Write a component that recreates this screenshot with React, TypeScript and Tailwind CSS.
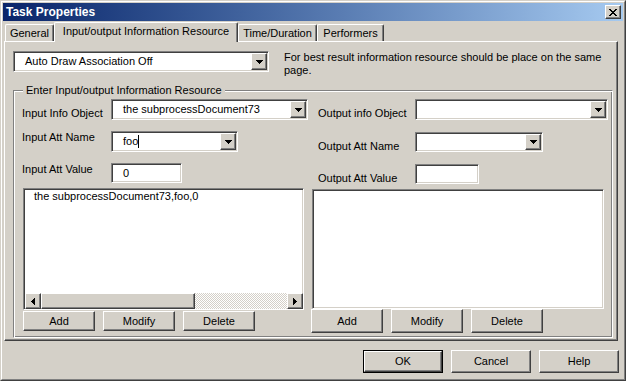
import React from 'react';

const raised =
  'border border-t-white border-l-white border-r-[#404040] border-b-[#404040] shadow-[inset_-1px_-1px_0_#808080]';
const sunken =
  'border border-t-[#808080] border-l-[#808080] border-r-white border-b-white shadow-[inset_1px_1px_0_#404040,inset_-1px_-1px_0_#d4d0c8]';

const DownArrow = () => (
  <svg width="7" height="4" viewBox="0 0 7 4" shapeRendering="crispEdges">
    <rect x="0" y="0" width="7" height="1" fill="#000" />
    <rect x="1" y="1" width="5" height="1" fill="#000" />
    <rect x="2" y="2" width="3" height="1" fill="#000" />
    <rect x="3" y="3" width="1" height="1" fill="#000" />
  </svg>
);

const LeftArrow = () => (
  <svg width="4" height="7" viewBox="0 0 4 7" shapeRendering="crispEdges">
    <rect x="0" y="3" width="1" height="1" fill="#000" />
    <rect x="1" y="2" width="1" height="3" fill="#000" />
    <rect x="2" y="1" width="1" height="5" fill="#000" />
    <rect x="3" y="0" width="1" height="7" fill="#000" />
  </svg>
);

const RightArrow = () => (
  <svg width="4" height="7" viewBox="0 0 4 7" shapeRendering="crispEdges">
    <rect x="0" y="0" width="1" height="7" fill="#000" />
    <rect x="1" y="1" width="1" height="5" fill="#000" />
    <rect x="2" y="2" width="1" height="3" fill="#000" />
    <rect x="3" y="3" width="1" height="1" fill="#000" />
  </svg>
);

const CloseX = () => (
  <svg width="8" height="7" viewBox="0 0 8 7" shapeRendering="crispEdges">
    <rect x="0" y="0" width="2" height="1" fill="#000" />
    <rect x="6" y="0" width="2" height="1" fill="#000" />
    <rect x="1" y="1" width="2" height="1" fill="#000" />
    <rect x="5" y="1" width="2" height="1" fill="#000" />
    <rect x="2" y="2" width="4" height="1" fill="#000" />
    <rect x="3" y="3" width="2" height="1" fill="#000" />
    <rect x="2" y="4" width="4" height="1" fill="#000" />
    <rect x="1" y="5" width="2" height="1" fill="#000" />
    <rect x="5" y="5" width="2" height="1" fill="#000" />
    <rect x="0" y="6" width="2" height="1" fill="#000" />
    <rect x="6" y="6" width="2" height="1" fill="#000" />
  </svg>
);

const Combo = ({ className, children }: { className: string; children?: React.ReactNode }) => (
  <div className={`flex bg-white ${sunken} ${className}`}>
    <div className="flex-1 flex items-center pl-[11px] whitespace-nowrap overflow-hidden">{children}</div>
    <div className={`m-px w-[16px] flex items-center justify-center bg-[#d4d0c8] ${raised}`}>
      <DownArrow />
    </div>
  </div>
);

const Edit = ({ className, children }: { className: string; children?: React.ReactNode }) => (
  <div className={`flex items-center bg-white pl-[11px] ${sunken} ${className}`}>{children}</div>
);

const Btn = ({ className, children }: { className: string; children: React.ReactNode }) => (
  <div className={`flex items-center justify-center bg-[#d4d0c8] ${raised} ${className}`}>{children}</div>
);

const Tab = ({ label, w }: { label: string; w: string }) => (
  <div
    className={`${w} h-[17px] flex items-center justify-center rounded-t-[2px] border-t border-l border-r border-t-white border-l-white border-r-[#404040] shadow-[inset_-1px_0_0_#808080]`}
  >
    {label}
  </div>
);

export default function App() {
  return (
    <div className="w-[626px] h-[381px] overflow-hidden bg-[#d4d0c8] font-['Liberation_Sans',Arial,sans-serif] text-[11px] leading-[13px] text-black border border-t-[#d4d0c8] border-l-[#d4d0c8] border-r-[#404040] border-b-[#404040]">
      <div className="h-full flex flex-col p-px border border-t-white border-l-white border-r-[#808080] border-b-[#808080]">
        {/* title bar */}
        <div className="h-[18px] shrink-0 flex items-center justify-between pl-[3px] pr-[2px] bg-linear-to-r from-[#0a246a] to-[#a6caf0]">
          <span className="text-white font-bold text-[12px]">Task Properties</span>
          <div className={`w-[16px] h-[14px] flex items-center justify-center bg-[#d4d0c8] ${raised}`}>
            <CloseX />
          </div>
        </div>

        {/* tabs */}
        <div className="h-[20px] shrink-0 flex items-end pl-[2px]">
          <Tab label="General" w="w-[49px]" />
          <div className="relative z-10 -mb-px w-[184px] h-[20px] pb-[2px] flex items-center justify-center bg-[#d4d0c8] rounded-t-[2px] border-t border-l border-r border-t-white border-l-white border-r-[#404040] shadow-[inset_-1px_0_0_#808080]">
            Input/output Information Resource
          </div>
          <Tab label="Time/Duration" w="w-[79px]" />
          <Tab label="Performers" w="w-[67px]" />
        </div>

        {/* panel */}
        <div className="ml-px w-[614px] h-[300px] shrink-0 pt-[9px] pl-[8px] border border-t-white border-l-white border-r-[#404040] border-b-[#404040] shadow-[inset_-1px_-1px_0_#808080]">
          <div className="flex items-start">
            <Combo className="w-[256px] h-[21px]">Auto Draw Association Off</Combo>
            <p className="ml-[15px] w-[318px]">
              For best result information resource should be place on the same page.
            </p>
          </div>

          <fieldset className="mt-[7px] w-[600px] h-[254px] border border-t-[#808080] border-l-[#808080] border-r-white border-b-white shadow-[inset_1px_1px_0_#fff,inset_-1px_-1px_0_#808080]">
            <legend className="ml-[9px] px-[3px] bg-[#d4d0c8]">Enter Input/output Information Resource</legend>
            <div className="flex">
              {/* left column */}
              <div className="ml-[8px] w-[289px] flex flex-col">
                <div className="flex items-start mt-[2px]">
                  <span className="w-[89px] mt-[8px]">Input Info Object</span>
                  <Combo className="w-[197px] h-[21px]">the subprocessDocument73</Combo>
                </div>
                <div className="flex items-start mt-[11px]">
                  <span className="w-[89px]">Input Att Name</span>
                  <Combo className="w-[127px] h-[21px]">
                    foo<span className="w-px h-[13px] bg-black" />
                  </Combo>
                </div>
                <div className="flex items-start mt-[11px]">
                  <span className="w-[89px]">Input Att Value</span>
                  <Edit className="w-[71px] h-[20px]">0</Edit>
                </div>
                <div className={`mt-[5px] ml-px w-[281px] h-[122px] flex flex-col bg-white ${sunken}`}>
                  <div className="flex-1 pt-px pl-[10px]">the subprocessDocument73,foo,0</div>
                  <div className="ml-px h-[16px] flex">
                    <div className={`w-[16px] h-[16px] flex items-center justify-center bg-[#d4d0c8] ${raised}`}>
                      <LeftArrow />
                    </div>
                    <div className={`w-[154px] h-[16px] bg-[#d4d0c8] ${raised}`} />
                    <div className="flex-1 bg-[repeating-conic-gradient(#ffffff_0_25%,#d4d0c8_0_50%)] bg-[length:2px_2px]" />
                    <div className={`w-[16px] h-[16px] flex items-center justify-center bg-[#d4d0c8] ${raised}`}>
                      <RightArrow />
                    </div>
                  </div>
                </div>
                <div className="mt-px ml-px flex gap-[8px]">
                  <Btn className="w-[72px] h-[20px]">Add</Btn>
                  <Btn className="w-[72px] h-[20px]">Modify</Btn>
                  <Btn className="w-[72px] h-[20px]">Delete</Btn>
                </div>
              </div>

              {/* right column */}
              <div className="w-[297px] flex flex-col">
                <div className="flex items-start mt-[2px]">
                  <span className="w-[104px] pl-[7px] mt-[8px]">Output info Object</span>
                  <Combo className="w-[193px] h-[21px]" />
                </div>
                <div className="flex items-start mt-[12px]">
                  <span className="w-[104px] pl-[7px] mt-[8px]">Output Att Name</span>
                  <Combo className="w-[128px] h-[20px]" />
                </div>
                <div className="flex items-start mt-[11px]">
                  <span className="w-[104px] pl-[7px] mt-[8px]">Output Att Value</span>
                  <Edit className="w-[64px] h-[20px]" />
                </div>
                <div className={`mt-[4px] ml-px w-[292px] h-[120px] bg-white ${sunken}`} />
                <div className="flex gap-[8px]">
                  <Btn className="w-[72px] h-[24px]">Add</Btn>
                  <Btn className="w-[72px] h-[24px]">Modify</Btn>
                  <Btn className="w-[72px] h-[24px]">Delete</Btn>
                </div>
              </div>
            </div>
          </fieldset>
        </div>

        {/* dialog buttons */}
        <div className="mt-[9px] pr-[4px] flex justify-end gap-[8px]">
          <div className="w-[80px] h-[23px] border border-black">
            <Btn className="w-full h-full">OK</Btn>
          </div>
          <Btn className="w-[80px] h-[23px]">Cancel</Btn>
          <Btn className="w-[80px] h-[23px]">Help</Btn>
        </div>
      </div>
    </div>
  );
}
